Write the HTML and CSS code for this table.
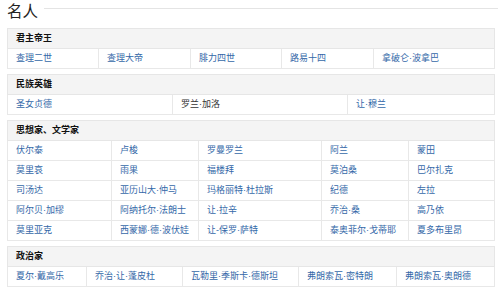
FILE: index.html
```html
<!DOCTYPE html>
<html lang="zh">
<head>
<meta charset="utf-8">
<link rel="stylesheet" href="styles.css">
</head>
<body>
<div class="page">
  <div class="title-bar"><h2 class="title">名人</h2><span class="rule"></span></div>

  <table class="grp">
    <colgroup><col class="w91"><col class="w92"><col class="w91"><col class="w92"><col></colgroup>
    <tr><th colspan="5">君主帝王</th></tr>
    <tr><td><a>查理二世</a></td><td><a>查理大帝</a></td><td><a>腓力四世</a></td><td><a>路易十四</a></td><td><a>拿破仑·波拿巴</a></td></tr>
  </table>

  <table class="grp">
    <colgroup><col class="w165"><col class="w175"><col></colgroup>
    <tr><th colspan="3">民族英雄</th></tr>
    <tr><td><a>圣女贞德</a></td><td class="plain">罗兰·加洛</td><td><a>让·穆兰</a></td></tr>
  </table>

  <table class="grp">
    <colgroup><col class="w104"><col class="w87"><col class="w123"><col class="w87"><col></colgroup>
    <tr><th colspan="5">思想家、文学家</th></tr>
    <tr><td><a>伏尔泰</a></td><td><a>卢梭</a></td><td><a>罗曼罗兰</a></td><td><a>阿兰</a></td><td><a>蒙田</a></td></tr>
    <tr><td><a>莫里哀</a></td><td><a>雨果</a></td><td><a>福楼拜</a></td><td><a>莫泊桑</a></td><td><a>巴尔扎克</a></td></tr>
    <tr><td><a>司汤达</a></td><td><a>亚历山大·仲马</a></td><td><a>玛格丽特·杜拉斯</a></td><td><a>纪德</a></td><td><a>左拉</a></td></tr>
    <tr><td><a>阿尔贝·加缪</a></td><td><a>阿纳托尔·法朗士</a></td><td><a>让·拉辛</a></td><td><a>乔治·桑</a></td><td><a>高乃依</a></td></tr>
    <tr><td><a>莫里亚克</a></td><td><a>西蒙娜·德·波伏娃</a></td><td><a>让-保罗·萨特</a></td><td><a>泰奥菲尔·戈蒂耶</a></td><td><a>夏多布里昂</a></td></tr>
  </table>

  <table class="grp">
    <colgroup><col class="w79"><col class="w96"><col class="w116"><col class="w98"><col></colgroup>
    <tr><th colspan="5">政治家</th></tr>
    <tr><td><a>夏尔·戴高乐</a></td><td><a>乔治·让·蓬皮杜</a></td><td><a>瓦勒里·季斯卡·德斯坦</a></td><td><a>弗朗索瓦·密特朗</a></td><td><a>弗朗索瓦·奥朗德</a></td></tr>
  </table>
</div>
</body>
</html>
```
FILE: styles.css
```css
html, body {
  margin: 0;
  padding: 0;
  background: #fff;
}
body {
  font-family: "Liberation Sans", "Noto Sans CJK SC", sans-serif;
  color: #222;
}
.page {
  width: 488px;
  margin-left: 7px;
}
.title-bar {
  display: flex;
  align-items: center;
  height: 20px;
  margin-bottom: 8px;
}
.title {
  margin: 0;
  font-family: "Noto Sans CJK SC", sans-serif;
  font-size: 15.5px;
  font-weight: normal;
  line-height: 20px;
  color: #222;
}
.rule {
  flex: 1;
  height: 1px;
  background: #e4e4e4;
  margin-left: 6px;
  margin-right: -3px;
  position: relative;
  top: -2px;
}
.grp {
  width: 488px;
  table-layout: fixed;
  border-collapse: collapse;
  margin-bottom: 5px;
  font-size: 9px;
}
.grp th, .grp td {
  height: 19px;
  padding: 0 0 0 8px;
  text-align: left;
  white-space: nowrap;
  overflow: hidden;
  border: 1px solid #e8e8e8;
  line-height: 19px;
}
.grp th {
  background: #f4f4f4;
  font-weight: bold;
  color: #111;
  border-color: #e6e6e6;
}
.grp td a {
  color: #3468a8;
  text-decoration: none;
}
.grp td.plain {
  color: #333;
}
.w79 { width: 79px; }
.w87 { width: 87px; }
.w91 { width: 91px; }
.w92 { width: 92px; }
.w96 { width: 96px; }
.w98 { width: 98px; }
.w104 { width: 104px; }
.w116 { width: 116px; }
.w123 { width: 123px; }
.w165 { width: 165px; }
.w175 { width: 175px; }
```
